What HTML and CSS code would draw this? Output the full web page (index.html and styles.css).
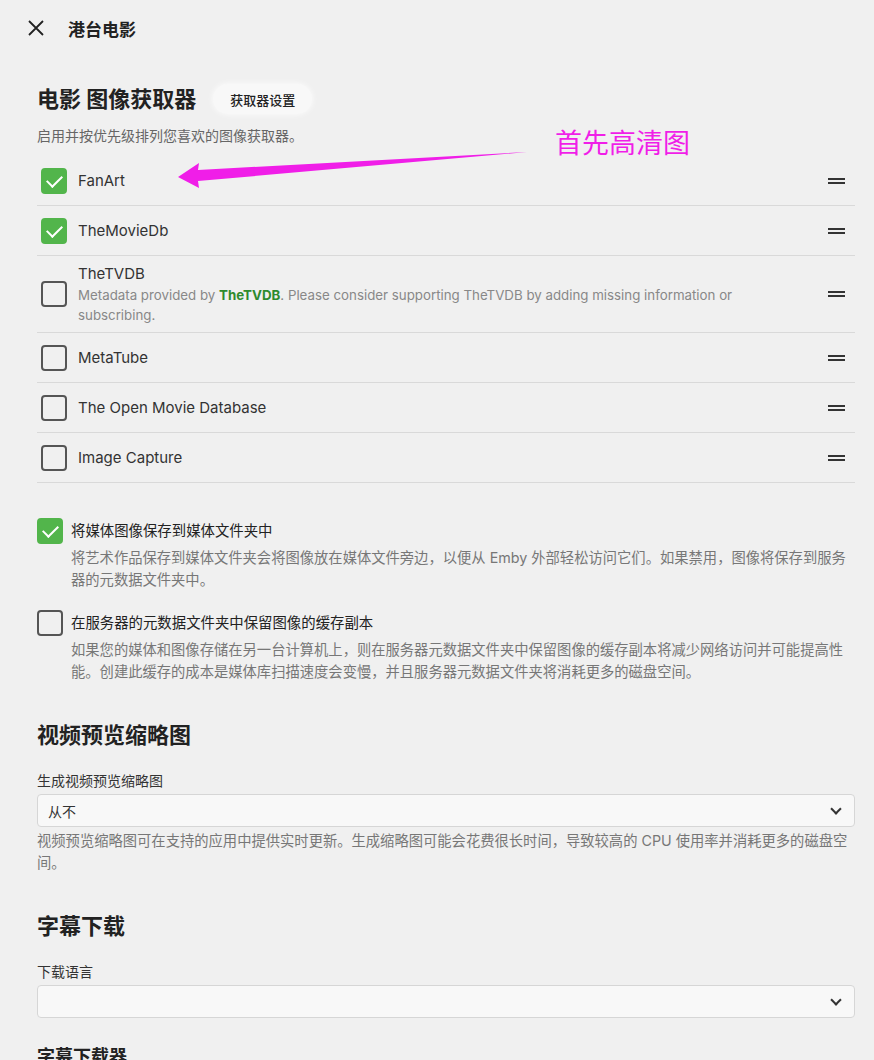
FILE: index.html
```html
<!DOCTYPE html>
<html lang="zh-CN">
<head>
    <meta charset="UTF-8">
    <title>港台电影</title>
    <link rel="stylesheet" href="styles.css">
</head>
<body>
<!--顶部栏-->
<div class="topbar">
    <span class="close">
        <svg width="18" height="18" viewBox="0 0 18 18"><path d="M2 2L16 16M16 2L2 16" stroke="#222" stroke-width="1.8" fill="none"/></svg>
    </span>
    <span class="title">港台电影</span>
</div>

<div class="main">
    <!--图像获取器-->
    <div class="head-row">
        <h2>电影 图像获取器</h2>
        <button class="pill">获取器设置</button>
    </div>
    <p class="sub">启用并按优先级排列您喜欢的图像获取器。</p>

    <ul class="fetchers">
        <li>
            <span class="box on"></span>
            <div class="name">FanArt</div>
            <span class="drag"></span>
        </li>
        <li>
            <span class="box on"></span>
            <div class="name">TheMovieDb</div>
            <span class="drag"></span>
        </li>
        <li class="tall">
            <span class="box"></span>
            <div class="name">
                <div>TheTVDB</div>
                <div class="note">Metadata provided by <b>TheTVDB</b>. Please consider supporting TheTVDB by adding missing information or subscribing.</div>
            </div>
            <span class="drag"></span>
        </li>
        <li>
            <span class="box"></span>
            <div class="name">MetaTube</div>
            <span class="drag"></span>
        </li>
        <li>
            <span class="box"></span>
            <div class="name">The Open Movie Database</div>
            <span class="drag"></span>
        </li>
        <li>
            <span class="box"></span>
            <div class="name">Image Capture</div>
            <span class="drag"></span>
        </li>
    </ul>

    <div class="opt first">
        <span class="box on"></span>
        <div class="opt-text">
            <div class="opt-label">将媒体图像保存到媒体文件夹中</div>
            <div class="desc">将艺术作品保存到媒体文件夹会将图像放在媒体文件旁边，以便从 Emby 外部轻松访问它们。如果禁用，图像将保存到服务器的元数据文件夹中。</div>
        </div>
    </div>
    <div class="opt">
        <span class="box"></span>
        <div class="opt-text">
            <div class="opt-label">在服务器的元数据文件夹中保留图像的缓存副本</div>
            <div class="desc">如果您的媒体和图像存储在另一台计算机上，则在服务器元数据文件夹中保留图像的缓存副本将减少网络访问并可能提高性能。创建此缓存的成本是媒体库扫描速度会变慢，并且服务器元数据文件夹将消耗更多的磁盘空间。</div>
        </div>
    </div>

    <!--视频预览缩略图-->
    <h2 class="sec">视频预览缩略图</h2>
    <div class="field">
        <div class="field-label">生成视频预览缩略图</div>
        <div class="select"><span>从不</span><i class="chev"></i></div>
        <div class="desc">视频预览缩略图可在支持的应用中提供实时更新。生成缩略图可能会花费很长时间，导致较高的 CPU 使用率并消耗更多的磁盘空间。</div>
    </div>

    <!--字幕下载-->
    <h2 class="sec">字幕下载</h2>
    <div class="field">
        <div class="field-label">下载语言</div>
        <div class="select"><span></span><i class="chev"></i></div>
    </div>
    <h3 class="sub-sec">字幕下载器</h3>

    <!--标注-->
    <svg class="arrow" width="874" height="220" viewBox="0 0 874 220">
        <polygon points="178,177 199,163 198,170 527,152 198,181 199,188" fill="#f01ee8"/>
    </svg>
    <div class="mark">首先高清图</div>
</div>
</body>
</html>
```

FILE: styles.css
```css
*{margin:0;padding:0;box-sizing:border-box;}
body{
    background:#f0f0f0;
    color:#222;
    font-family:Inter,"Noto Sans CJK SC",sans-serif;
    position:relative;
    overflow:hidden;
    height:1060px;
}
li{list-style:none;}
.topbar{
    display:flex;
    align-items:center;
    height:56px;
    padding-left:27px;
}
.close{display:flex;width:18px;height:18px;}
.title{
    margin-left:23px;
    font-size:17px;
    font-weight:700;
}
.main{padding:0 19px 0 37px;}
.head-row{
    display:flex;
    align-items:center;
    margin-top:28px;
    height:30px;
}
h2{
    font-size:22px;
    font-weight:700;
    line-height:30px;
}
.pill{
    margin-left:17px;
    height:30px;
    padding:0 17px;
    border:0;
    border-radius:15px;
    background:#f8f8f8;
    box-shadow:0 0 6px rgba(255,255,255,.9);
    font-family:inherit;
    font-size:13px;
    font-weight:500;
    color:#222;
}
.sub{
    margin-top:13px;
    font-size:14px;
    line-height:18px;
    color:#666;
}
.fetchers{margin-top:11px;}
.fetchers li{
    display:flex;
    align-items:center;
    height:50px;
    padding-left:4px;
    border-bottom:1px solid #d9d9d9;
}
.fetchers li.tall{height:77px;}
.box{
    flex:none;
    width:26px;
    height:26px;
    border:2px solid #555;
    border-radius:4px;
    position:relative;
}
.box.on{
    background:#52b54b;
    border-color:#52b54b;
}
.box.on:after{
    content:"";
    position:absolute;
    left:7px;
    top:2px;
    width:7px;
    height:13px;
    border:solid #fff;
    border-width:0 2px 2px 0;
    transform:rotate(45deg);
}
.name{
    flex:1;
    margin-left:11px;
    font-size:15px;
    color:#333;
}
.note{
    margin-top:2px;
    font-size:13.3px;
    line-height:20px;
    color:#888;
    padding-right:90px;
}
.note b{color:#2e8b2e;}
.drag{
    flex:none;
    width:17px;
    height:6px;
    margin-right:10px;
    border-top:2px solid #333;
    border-bottom:2px solid #333;
}
.opt{
    display:flex;
    align-items:flex-start;
}
.opt.first{margin-top:35px;}
.opt + .opt{margin-top:19px;}
.opt-text{margin-left:8px;}
.opt-label{
    font-size:14.4px;
    line-height:26px;
    color:#222;
}
.opt-text .desc{margin-top:3px;}
.desc{
    font-size:14.3px;
    line-height:22px;
    color:#777;
}
.sec{margin-top:37px;}
.field{margin-top:22px;}
.field-label{
    font-size:14px;
    line-height:18px;
    color:#333;
}
.select{
    display:flex;
    align-items:center;
    justify-content:space-between;
    height:33px;
    margin-top:4px;
    padding:0 10px;
    background:#f8f8f8;
    border:1px solid #d6d6d6;
    border-radius:4px;
    font-size:14px;
    color:#333;
    margin-bottom:3px;
}
.chev{
    width:8px;
    height:8px;
    margin-right:4px;
    margin-top:-4px;
    border:solid #333;
    border-width:0 2px 2px 0;
    transform:rotate(45deg);
}
.sub-sec{
    margin-top:24px;
    font-size:18px;
    font-weight:700;
}
.arrow{
    position:absolute;
    left:0;
    top:0;
    pointer-events:none;
}
.mark{
    position:absolute;
    left:555px;
    top:126px;
    font-size:27px;
    line-height:36px;
    color:#f01ee8;
}
```
